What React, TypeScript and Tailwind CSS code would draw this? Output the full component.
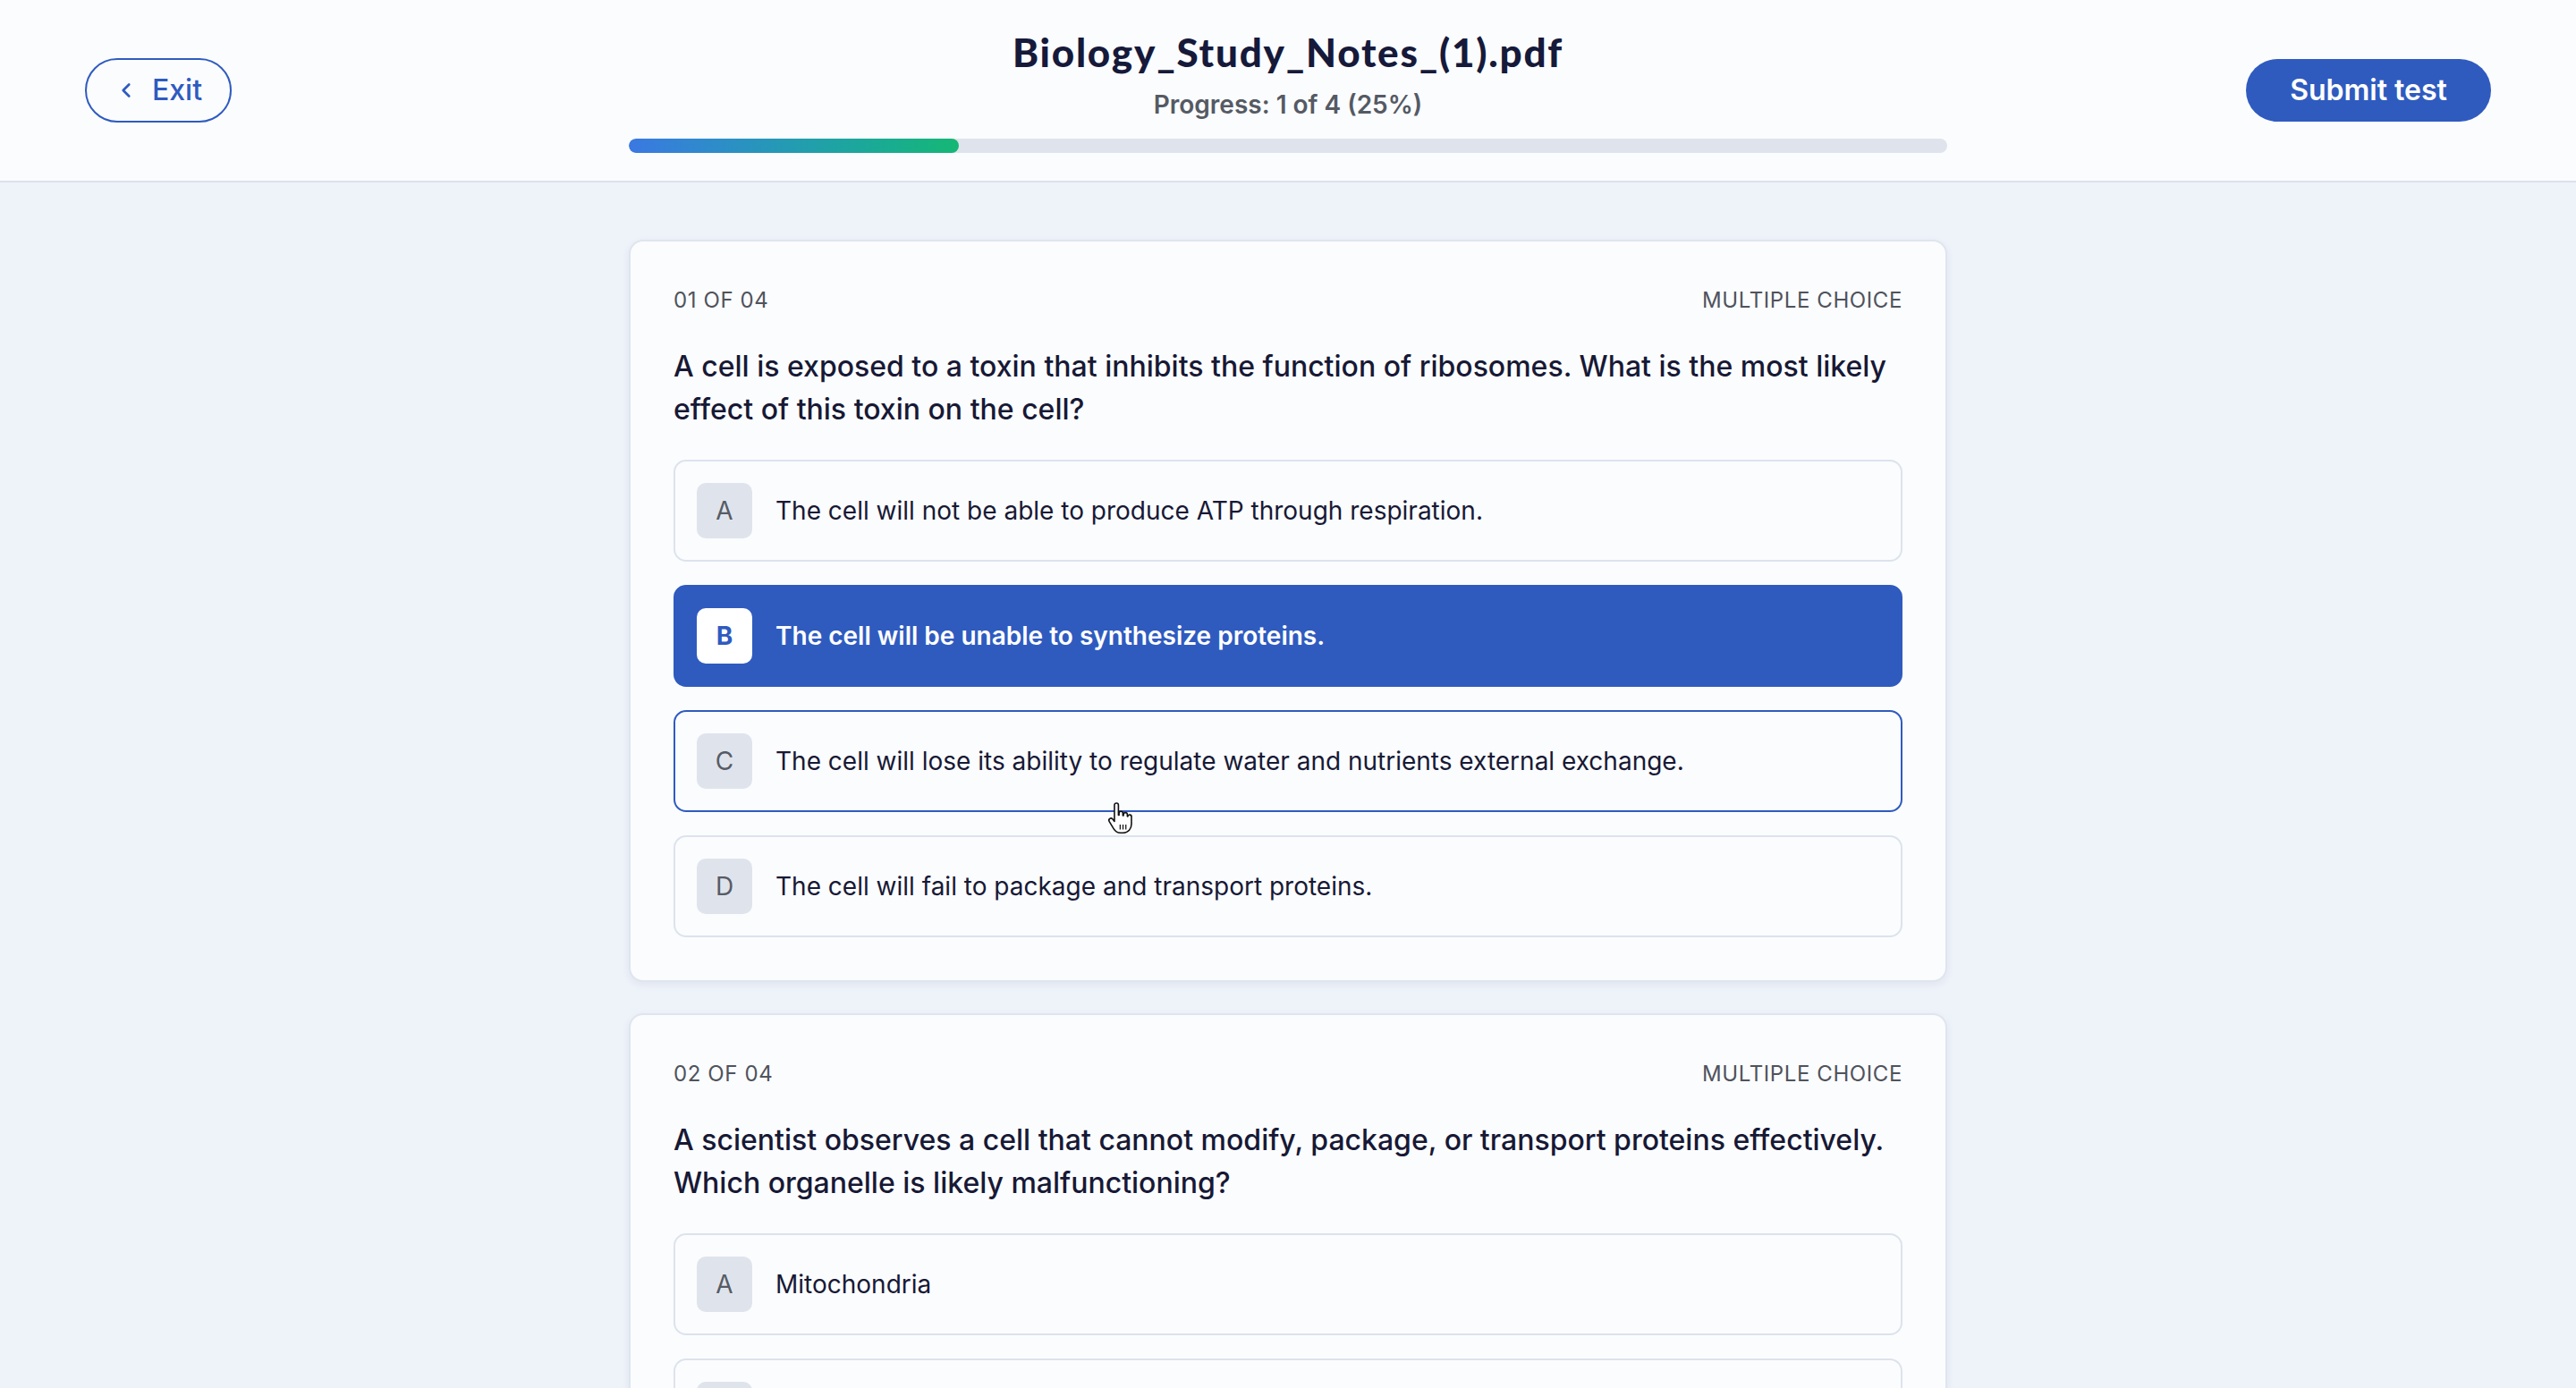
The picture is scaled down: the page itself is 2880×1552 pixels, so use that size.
import React from "react";
import { ChevronLeft } from "lucide-react";

type Q = { num: string; text: string; options: string[]; selected?: number; hover?: number };

const questions: Q[] = [
  {
    num: "01 OF 04",
    text: "A cell is exposed to a toxin that inhibits the function of ribosomes. What is the most likely effect of this toxin on the cell?",
    options: [
      "The cell will not be able to produce ATP through respiration.",
      "The cell will be unable to synthesize proteins.",
      "The cell will lose its ability to regulate water and nutrients external exchange.",
      "The cell will fail to package and transport proteins.",
    ],
    selected: 1,
    hover: 2,
  },
  {
    num: "02 OF 04",
    text: "A scientist observes a cell that cannot modify, package, or transport proteins effectively. Which organelle is likely malfunctioning?",
    options: ["Mitochondria", "Golgi apparatus", "Ribosomes", "Lysosomes"],
  },
];

const letters = ["A", "B", "C", "D"];

function HandCursor() {
  return (
    <svg
      className="absolute left-[481px] top-[100px] w-[32px] h-[38px] pointer-events-none"
      viewBox="0 0 18 21"
    >
      <path
        d="M5.6 2.2a1.25 1.25 0 0 1 2.5 0v6.3h.4V7.3a1.2 1.2 0 0 1 2.4 0v1.5h.4V8.1a1.2 1.2 0 0 1 2.4 0v1.2h.3a1.15 1.15 0 0 1 2.3.3V14c0 3.2-2 5.6-5.1 5.6H9.3c-2 0-3.2-1-4.200-2.6L2.3 12.4a1.3 1.3 0 0 1 2.1-1.5l1.2 1.5Z"
        fill="#ffffff"
        stroke="#111111"
        strokeWidth="0.9"
        strokeLinejoin="round"
      />
      <path d="M9.2 14.5v3M11 14.5v3M12.8 14.5v3" stroke="#111111" strokeWidth="0.7" />
    </svg>
  );
}

function Option({ letter, text, selected, hover }: { letter: string; text: string; selected?: boolean; hover?: boolean }) {
  if (selected) {
    return (
      <div className="h-[114px] rounded-[14px] border-2 border-[#2f5bbf] bg-[#2f5bbf] px-[24px] flex items-center gap-[26px]">
        <div className="w-[62px] h-[62px] shrink-0 rounded-[10px] bg-white flex items-center justify-center text-[28px] font-bold text-[#2f5bbf]">
          {letter}
        </div>
        <div className="text-[28px] font-semibold text-white">{text}</div>
      </div>
    );
  }
  return (
    <div
      className={
        hover
          ? "relative h-[114px] rounded-[14px] border-2 border-[#2f5bbf] bg-[#fbfcfe] px-[24px] flex items-center gap-[26px]"
          : "relative h-[114px] rounded-[14px] border-2 border-[#dde3ed] bg-[#fbfcfe] px-[24px] flex items-center gap-[26px]"
      }
    >
      <div className="w-[62px] h-[62px] shrink-0 rounded-[10px] bg-[#dfe4ec] flex items-center justify-center text-[28px] text-[#575b66]">
        {letter}
      </div>
      <div className="text-[28px] text-[#171935]">{text}</div>
      {hover ? <HandCursor /> : null}
    </div>
  );
}

function Card({ q }: { q: Q }) {
  return (
    <div className="w-[1474px] shrink-0 rounded-[16px] border-2 border-[#dfe5ef] bg-[#fbfcfe] shadow-[0_3px_8px_rgba(40,60,110,0.07)] px-[48px] pt-[48px] pb-[48px]">
      <div className="flex justify-between text-[24px] leading-[36px] tracking-wide text-[#4f535c]">
        <span>{q.num}</span>
        <span>MULTIPLE CHOICE</span>
      </div>
      <div className="mt-[32px] text-[32px] leading-[48px] font-medium text-[#171935]">{q.text}</div>
      <div className="mt-[32px] flex flex-col gap-[26px]">
        {q.options.map((o, i) => (
          <Option key={i} letter={letters[i]} text={o} selected={q.selected === i} hover={q.hover === i} />
        ))}
      </div>
    </div>
  );
}

export default function App() {
  return (
    <div className="min-h-screen bg-[#eef2f9] font-['Inter',sans-serif]">
      <header className="h-[204px] bg-[#fbfcfe] border-b-2 border-[#dce2ec] grid grid-cols-[1fr_1474px_1fr] items-center px-[95px]">
        <div className="flex justify-start">
          <button className="h-[72px] w-[164px] rounded-full border-2 border-[#2f5bbf] flex items-center justify-center gap-[16px] text-[#2f5bbf]">
            <ChevronLeft size={26} strokeWidth={2.5} />
            <span className="text-[32px] font-medium">Exit</span>
          </button>
        </div>
        <div className="flex flex-col items-center">
          <div className="text-[44px] leading-[54px] font-black tracking-[0.04em] text-[#161a3a] font-['Lato',sans-serif]">
            Biology_Study_Notes_(1).pdf
          </div>
          <div className="mt-[14px] text-[28px] leading-[36px] font-semibold text-[#555a64]">Progress: 1 of 4 (25%)</div>
          <div className="mt-[20px] w-full h-[16px] rounded-full bg-[#dfe4ec] overflow-hidden">
            <div className="h-full w-[25%] rounded-full bg-gradient-to-r from-[#3a78e2] to-[#16b774]" />
          </div>
        </div>
        <div className="flex justify-end">
          <button className="h-[70px] w-[274px] rounded-full bg-[#2f5bbf] text-white text-[32px] font-semibold">
            Submit test
          </button>
        </div>
      </header>
      <main className="pt-[64px] pb-[40px] flex flex-col items-center gap-[35px]">
        {questions.map((q, i) => (
          <Card key={i} q={q} />
        ))}
      </main>
    </div>
  );
}
